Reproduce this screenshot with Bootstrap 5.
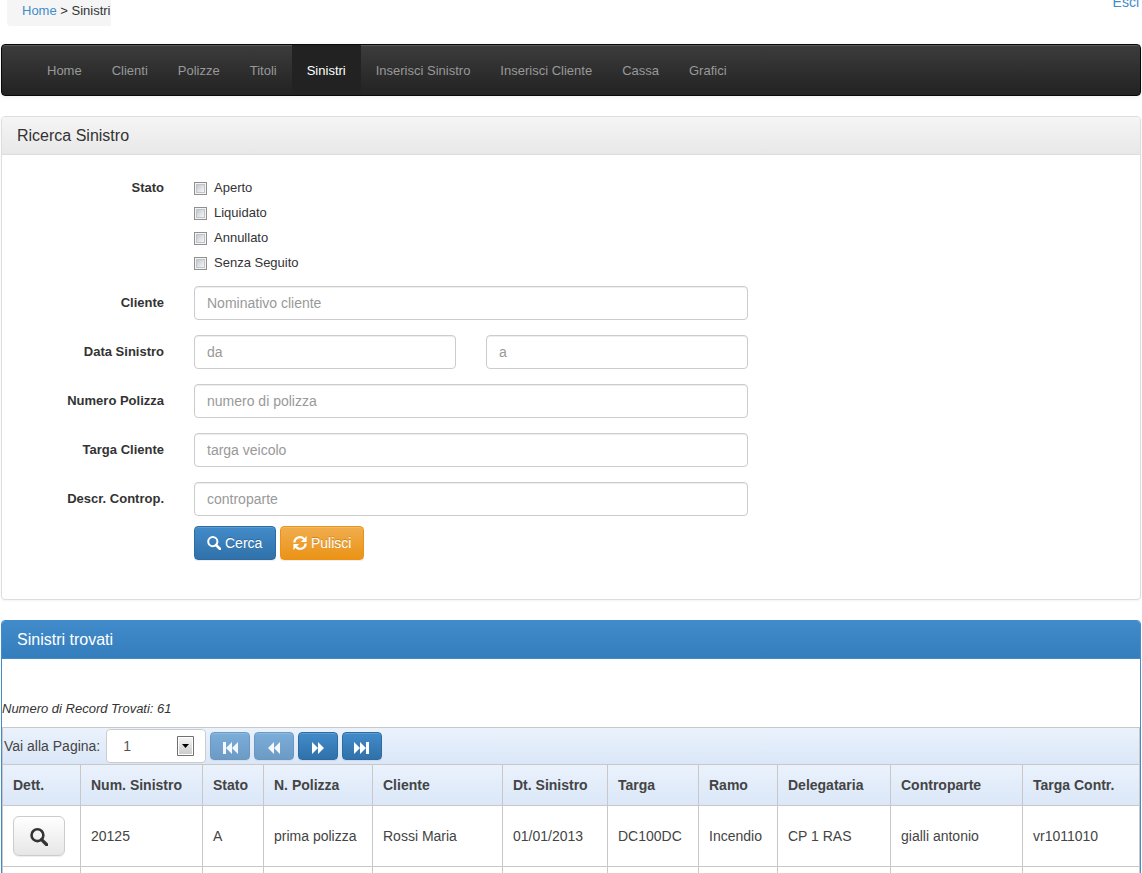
<!DOCTYPE html>
<html lang="it">
<head>
<meta charset="utf-8">
<meta name="viewport" content="width=device-width, initial-scale=1">
<title>Sinistri</title>
<link href="https://cdn.jsdelivr.net/npm/bootstrap@5.3.0/dist/css/bootstrap.min.css" rel="stylesheet">
<style>
body{font-family:"Liberation Sans",Arial,sans-serif;font-size:13px;line-height:20px;color:#333;background:#fff}
a{color:#428bca;text-decoration:none}
.page{padding:0 1px}
.topbar{height:44px;overflow:hidden}
.crumbs{margin-left:6px;height:26px;padding:1px 0 0 15px;background:#f5f5f5;border-radius:0 0 0 4px}
.logout{font-size:14px;margin:-8px 2px 0 0}
.mainnav{padding:0 30px;border:1px solid #080808;border-radius:4px;background:linear-gradient(#3c3c3c,#222);box-shadow:inset 0 1px 0 rgba(255,255,255,.15),0 1px 5px rgba(0,0,0,.075);margin-bottom:20px}
.mainnav .nav-link{padding:16px 15px 14px;color:#999}
.mainnav .nav-link.active{color:#fff;background:#222}
.box{border:1px solid #ddd;border-radius:4px;margin-bottom:20px;box-shadow:0 1px 2px rgba(0,0,0,.05)}
.box-title{font-size:16px;line-height:17px;padding:10px 15px;margin:0;font-weight:400;border-bottom:1px solid #ddd;border-radius:3px 3px 0 0;background:linear-gradient(#f5f5f5,#e8e8e8)}
.box-blue{border-color:#428bca}
.box-blue .box-title{color:#fff;border-color:#428bca;background:linear-gradient(#428bca,#357ebd)}
.search{padding:20px 15px 39px}
.line{display:flex;gap:30px;margin-bottom:15px}
.caption{flex:0 0 147px;text-align:right;font-weight:700;padding:7px 0}
.line .form-control{height:34px;font-size:14px;line-height:20px;padding:6px 12px;border:1px solid #ccc;border-radius:4px;color:#555;box-shadow:inset 0 1px 1px rgba(0,0,0,.075)}
.form-control::placeholder{color:#999}
.state{margin-bottom:11px}
.state .caption{padding:3px 0}
.before-actions{margin-bottom:10px}
.tick{display:flex;align-items:center;gap:7px;height:25px}
.tick input{appearance:none;width:13px;height:13px;margin:1px 0 0;border:1px solid #8e8f8f;background:linear-gradient(135deg,#c4c9d0,#f6f6f6) content-box;padding:2px;box-shadow:inset 0 0 0 1px #f4f4f4,inset 0 0 0 2px #bfc4ca}
.tick input:checked{background:#357ebd content-box}
.action{font-size:14px;line-height:20px;padding:6px 12px;border-radius:4px;color:#fff;text-shadow:0 -1px 0 rgba(0,0,0,.2);box-shadow:inset 0 1px 0 rgba(255,255,255,.15),0 1px 1px rgba(0,0,0,.075)}
.action:hover{color:#fff}
.submit{min-width:82px}
.blue{background:linear-gradient(#428bca,#3071a9);border-color:#2d6ca2}
.orange{background:linear-gradient(#f0ad4e,#eb9316);border-color:#eb9316}
.pager-btn{width:40px;height:28px;padding:4px 0 0;display:flex;align-items:center;justify-content:center}
.pager-btn:disabled{opacity:.65;color:#fff;background:linear-gradient(#428bca,#3071a9);border-color:#2d6ca2}
.detail{width:52px;height:40px;padding:0;border:1px solid #ccc;border-radius:6px;background:linear-gradient(#fff,#e6e6e6);color:#333;box-shadow:0 1px 1px rgba(0,0,0,.075)}
.count{padding:40px 0 8px;font-style:italic}
.toolbar{height:37px;padding-left:1px;border:1px solid #c8c8c8;border-bottom:0;background:linear-gradient(#eaf2fc,#dbe7f8);color:#444;font-size:14px}
.pick{margin-left:2px}
.pick select{display:block;appearance:none;width:100px;height:34px;border:1px solid #ccc;border-radius:4px;background:#fff;color:#555;font-size:14px;padding:0 16px}
.pick svg{position:absolute;right:12px;top:7px;pointer-events:none}
.results{width:100%;table-layout:fixed;border-collapse:collapse;font-size:14px;color:#444}
.results th,.results td{border:1px solid #c8c8c8;padding:10px;white-space:nowrap}
.results thead{background:linear-gradient(#eaf2fc,#dbe7f8)}
.results td{height:61px}
.w61{width:61px}.w78{width:78px}.w79{width:79px}.w91{width:91px}.w105{width:105px}.w109{width:109px}.w113{width:113px}.w122{width:122px}.w130{width:130px}.w132{width:132px}
</style>
</head>
<body>
<svg class="d-none">
<symbol id="lens" viewBox="0 0 14 14"><circle cx="5.800" cy="5.600" r="4.600" fill="none" stroke="currentColor" stroke-width="2"/><path d="M9 9l4 4" stroke="currentColor" stroke-width="2.600" stroke-linecap="round"/></symbol>
<symbol id="reload" viewBox="0 0 14 14"><path d="M1.300 6.500A5.600 5.600 0 0 1 11 3M12.700 7.500A5.600 5.600 0 0 1 3 11" fill="none" stroke="currentColor" stroke-width="2.200"/><path d="M13.600 0v6H7.800zM.4 14V8h5.800z" fill="currentColor"/></symbol>
<symbol id="fwd" viewBox="0 0 16 14"><path d="M2 1l6 6V1l6 6-6 6V7l-6 6z" fill="currentColor"/></symbol>
<symbol id="last" viewBox="0 0 16 14"><path d="M0 1l6 6V1l6 6V1h3v12h-3V7l-6 6V7l-6 6z" fill="currentColor"/></symbol>
</svg>
<div class="page">
<header class="topbar d-flex justify-content-between align-items-start">
<nav class="crumbs" aria-label="Percorso"><a href="#">Home</a> &gt; Sinistri</nav>
<a class="logout" href="#">Esci</a>
</header>
<nav class="mainnav">
<ul class="nav flex-wrap">
<li class="nav-item"><a class="nav-link" href="#">Home</a></li>
<li class="nav-item"><a class="nav-link" href="#">Clienti</a></li>
<li class="nav-item"><a class="nav-link" href="#">Polizze</a></li>
<li class="nav-item"><a class="nav-link" href="#">Titoli</a></li>
<li class="nav-item"><a class="nav-link active" aria-current="page" href="#">Sinistri</a></li>
<li class="nav-item"><a class="nav-link" href="#">Inserisci Sinistro</a></li>
<li class="nav-item"><a class="nav-link" href="#">Inserisci Cliente</a></li>
<li class="nav-item"><a class="nav-link" href="#">Cassa</a></li>
<li class="nav-item"><a class="nav-link" href="#">Grafici</a></li>
</ul>
</nav>
<section class="box">
<h2 class="box-title">Ricerca Sinistro</h2>
<form class="search">
<div class="line state" role="group" aria-labelledby="stato">
<span class="caption" id="stato">Stato</span>
<div>
<label class="tick"><input type="checkbox">Aperto</label>
<label class="tick"><input type="checkbox">Liquidato</label>
<label class="tick"><input type="checkbox">Annullato</label>
<label class="tick"><input type="checkbox">Senza Seguito</label>
</div>
</div>
<div class="line"><label class="caption" for="cliente">Cliente</label><div class="col-6"><input class="form-control" id="cliente" type="text" placeholder="Nominativo cliente"></div></div>
<div class="line"><label class="caption" for="da">Data Sinistro</label><div class="col-6 d-flex line mb-0"><input class="form-control" id="da" type="text" placeholder="da"><input class="form-control" type="text" aria-label="Data Sinistro a" placeholder="a"></div></div>
<div class="line"><label class="caption" for="polizza">Numero Polizza</label><div class="col-6"><input class="form-control" id="polizza" type="text" placeholder="numero di polizza"></div></div>
<div class="line"><label class="caption" for="targa">Targa Cliente</label><div class="col-6"><input class="form-control" id="targa" type="text" placeholder="targa veicolo"></div></div>
<div class="line before-actions"><label class="caption" for="controp">Descr. Controp.</label><div class="col-6"><input class="form-control" id="controp" type="text" placeholder="controparte"></div></div>
<div class="line mb-0"><span class="caption p-0"></span><div class="d-flex gap-1">
<button type="submit" class="btn action submit blue d-flex align-items-center gap-1"><svg width="14" height="14"><use href="#lens"/></svg>Cerca</button>
<button type="reset" class="btn action orange d-flex align-items-center gap-1"><svg width="14" height="14"><use href="#reload"/></svg>Pulisci</button>
</div></div>
</form>
</section>
<section class="box box-blue">
<h2 class="box-title">Sinistri trovati</h2>
<div class="count">Numero di Record Trovati: 61</div>
<div class="toolbar d-flex align-items-center gap-1">
<label for="pagina">Vai alla Pagina:</label>
<div class="pick position-relative"><select id="pagina"><option>1</option><option>2</option><option>3</option></select>
<svg width="17" height="20"><defs><linearGradient id="g" x2="0" y2="1"><stop stop-color="#f4f4f4"/><stop offset="1" stop-color="#ccc"/></linearGradient></defs><path d="M.5.5h16v19H.5z" fill="#fff" stroke="#707070"/><path d="M2 2h13v16H2z" fill="url(#g)"/><path d="M5 8h7l-3.500 4z" fill="#000"/></svg></div>
<button class="btn action blue pager-btn" disabled aria-label="Prima pagina"><svg width="16" height="14"><use href="#last" transform="rotate(180 8 7)"/></svg></button>
<button class="btn action blue pager-btn" disabled aria-label="Pagina precedente"><svg width="16" height="14"><use href="#fwd" transform="rotate(180 8 7)"/></svg></button>
<button class="btn action blue pager-btn" aria-label="Pagina successiva"><svg width="16" height="14"><use href="#fwd"/></svg></button>
<button class="btn action blue pager-btn" aria-label="Ultima pagina"><svg width="16" height="14"><use href="#last"/></svg></button>
</div>
<table class="results">
<colgroup><col class="w78"><col class="w122"><col class="w61"><col class="w109"><col class="w130"><col class="w105"><col class="w91"><col class="w79"><col class="w113"><col class="w132"><col></colgroup>
<thead><tr><th>Dett.</th><th>Num. Sinistro</th><th>Stato</th><th>N. Polizza</th><th>Cliente</th><th>Dt. Sinistro</th><th>Targa</th><th>Ramo</th><th>Delegataria</th><th>Controparte</th><th>Targa Contr.</th></tr></thead>
<tbody>
<tr><td><button class="detail" aria-label="Dettaglio"><svg width="18" height="18"><use href="#lens"/></svg></button></td><td>20125</td><td>A</td><td>prima polizza</td><td>Rossi Maria</td><td>01/01/2013</td><td>DC100DC</td><td>Incendio</td><td>CP 1 RAS</td><td>gialli antonio</td><td>vr1011010</td></tr>
<tr><td></td><td></td><td></td><td></td><td></td><td></td><td></td><td></td><td></td><td></td><td></td></tr>
</tbody>
</table>
</section>
</div>
<script src="https://cdn.jsdelivr.net/npm/bootstrap@5.3.0/dist/js/bootstrap.bundle.min.js"></script>
</body>
</html>
